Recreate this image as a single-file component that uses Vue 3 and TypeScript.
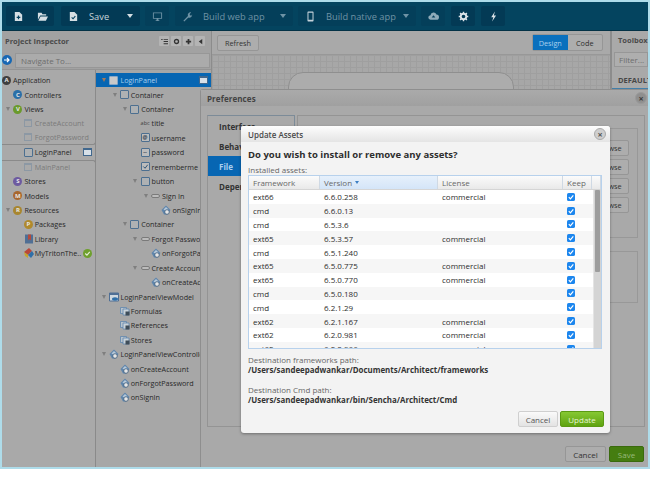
<script setup lang="ts">
interface Row {
  label: string
  level: number
  icon: string
  letter?: string
  color?: string
  arrow?: boolean
  dim?: boolean
  selected?: boolean
  badge?: string
}

const colTop: Row[] = [
  { label: 'Application', level: 0, icon: 'badge', letter: 'A', color: '#3f3f3f' },
  { label: 'Controllers', level: 1, icon: 'badge', letter: 'C', color: '#2a6fa8' },
  { label: 'Views', level: 1, icon: 'badge', letter: 'V', color: '#6a9a2c', arrow: true },
  { label: 'CreateAccount', level: 2, icon: 'win', dim: true },
  { label: 'ForgotPassword', level: 2, icon: 'win', dim: true },
]
const colMid: Row = { label: 'LoginPanel', level: 2, icon: 'box', badge: 'ctl' }
const colBottom: Row[] = [
  { label: 'MainPanel', level: 2, icon: 'win', dim: true },
  { label: 'Stores', level: 1, icon: 'badge', letter: 'S', color: '#6d5aa0' },
  { label: 'Models', level: 1, icon: 'badge', letter: 'M', color: '#a8672f' },
  { label: 'Resources', level: 1, icon: 'badge', letter: 'R', color: '#a8862f', arrow: true },
  { label: 'Packages', level: 2, icon: 'badge', letter: 'P', color: '#b08a2c' },
  { label: 'Library', level: 2, icon: 'book' },
  { label: 'MyTritonThe..', level: 2, icon: 'theme', badge: 'ok' },
]
const colTree: Row[] = [
  { label: 'LoginPanel', level: 0, icon: 'box', arrow: true, selected: true, badge: 'ctl' },
  { label: 'Container', level: 1, icon: 'box', arrow: true },
  { label: 'Container', level: 2, icon: 'box', arrow: true },
  { label: 'title', level: 3, icon: 'abc' },
  { label: 'username', level: 3, icon: 'at' },
  { label: 'password', level: 3, icon: 'pw' },
  { label: 'rememberme', level: 3, icon: 'chk' },
  { label: 'button', level: 3, icon: 'box', arrow: true },
  { label: 'Sign In', level: 4, icon: 'pill', arrow: true },
  { label: 'onSignIn', level: 5, icon: 'ctl' },
  { label: 'Container', level: 2, icon: 'box', arrow: true },
  { label: 'Forgot Password', level: 3, icon: 'pill', arrow: true },
  { label: 'onForgotPassword', level: 4, icon: 'ctl' },
  { label: 'Create Account', level: 3, icon: 'pill', arrow: true },
  { label: 'onCreateAccount', level: 4, icon: 'ctl' },
  { label: 'LoginPanelViewModel', level: 0, icon: 'vm', arrow: true },
  { label: 'Formulas', level: 1, icon: 'stack' },
  { label: 'References', level: 1, icon: 'stack' },
  { label: 'Stores', level: 1, icon: 'stack' },
  { label: 'LoginPanelViewController', level: 0, icon: 'ctl', arrow: true },
  { label: 'onCreateAccount', level: 1, icon: 'ctl' },
  { label: 'onForgotPassword', level: 1, icon: 'ctl' },
  { label: 'onSignIn', level: 1, icon: 'ctl' },
]
const assets = [
  ['ext66', '6.6.0.258', 'commercial'],
  ['cmd', '6.6.0.13', ''],
  ['cmd', '6.5.3.6', ''],
  ['ext65', '6.5.3.57', 'commercial'],
  ['cmd', '6.5.1.240', ''],
  ['ext65', '6.5.0.775', 'commercial'],
  ['ext65', '6.5.0.770', 'commercial'],
  ['cmd', '6.5.0.180', ''],
  ['cmd', '6.2.1.29', ''],
  ['ext62', '6.2.1.167', 'commercial'],
  ['ext62', '6.2.0.981', 'commercial'],
  ['ext62', '6.2.0.966', 'commercial'],
]
const prefTabs = ['Interface', 'Behavior', 'File', 'Dependencies']
const indent = (r: Row, base: number, extra = 0) => `${Math.max(0, r.level + base) * 10.4 + extra}px`
const colOnePad = (r: Row) => indent(r, -1, r.level > 0 ? 1 : 0)
</script>

<template>
  <div class="frame">
    <header class="toolbar">
      <div class="group first">
        <button class="tbtn"><svg viewBox="0 0 12 12"><path d="M2 1h5l3 3v7H2z" fill="#d6dfe4"/><path d="M6 5v4M4 7h4" stroke="#04405e" stroke-width="1.3"/></svg></button>
        <button class="tbtn"><svg viewBox="0 0 12 12"><path d="M1 2h4l1 1.500h4v1.500H3.500L1 9.500zM3.800 6H12l-2.300 4.500H1.500z" fill="#d6dfe4"/></svg></button>
      </div>
      <div class="group save">
        <button class="tbtn"><svg viewBox="0 0 12 12"><path d="M2 1h5l3 3v7H2z" fill="#d6dfe4"/><path d="M4 7l1.500 1.500L8 5.500" stroke="#04405e" stroke-width="1.200" fill="none"/></svg></button>
        <span class="tlabel bright">Save</span>
        <span class="caret bright"></span>
      </div>
      <div class="group dim">
        <button class="tbtn"><svg viewBox="0 0 12 12"><path d="M1 1.500h10v7H1zM2 2.500v5h8v-5zM4 10h4v1H4zM5 8.500h2V10H5z" fill="#6f93a5" fill-rule="evenodd"/></svg></button>
      </div>
      <div class="group dim wide web">
        <button class="tbtn"><svg viewBox="0 0 12 12"><path d="M1.500 10.500l5-5a3 3 0 0 1 3.500-4L8.300 3.200l.5 1.500 1.500.5L11 3.500a3 3 0 0 1-4 3.500l-4.500 4.500z" fill="#6f93a5"/></svg></button>
        <span class="tlabel">Build web app</span>
        <span class="caret"></span>
      </div>
      <div class="group dim wide">
        <button class="tbtn"><svg viewBox="0 0 12 12"><path d="M3.500 0.500h5a.8.8 0 0 1 .8.8v9.400a.8.8 0 0 1-.8.8h-5a.8.8 0 0 1-.8-.8V1.300a.8.8 0 0 1 .8-.8zM3.800 2v7.500h4.400V2z" fill="#c4d2da" fill-rule="evenodd"/></svg></button>
        <span class="tlabel">Build native app</span>
        <span class="caret"></span>
      </div>
      <div class="group dim">
        <button class="tbtn"><svg viewBox="0 0 12 12"><path d="M3 9.500a2.500 2.500 0 0 1-.3-5 3.400 3.400 0 0 1 6.500-.6A2.800 2.800 0 0 1 9.200 9.500z" fill="#8fabb9"/><path d="M6 4.500L4 7h4z" fill="#04405e"/></svg></button>
      </div>
      <div class="group nudge">
        <button class="tbtn"><svg viewBox="0 0 12 12"><circle cx="6" cy="6" r="3" fill="none" stroke="#dbe3e8" stroke-width="2"/><path d="M6 .8v2M6 9.200v2M.8 6h2M9.200 6h2M2.300 2.300l1.400 1.400M8.300 8.300l1.400 1.400M2.300 9.700l1.400-1.400M8.300 3.700l1.400-1.400" stroke="#dbe3e8" stroke-width="1.500"/></svg></button>
      </div>
      <div class="group nudge">
        <button class="tbtn"><svg viewBox="0 0 12 12"><path d="M7.500.5L3.500 6.800h2.300L4.500 11.500 8.800 4.800H6.400z" fill="#dbe3e8"/></svg></button>
      </div>
    </header>

    <div class="workspace">
      <aside class="inspector">
        <div class="insp-head">
          <span class="panel-title">Project Inspector</span>
          <div class="mini-tools">
            <span class="mini"><svg viewBox="0 0 8 8"><path d="M0 1h2v1H0zM3 1h5v1H3zM3 3.500h5v1H3zM3 6h5v1H3z" fill="#333"/></svg></span>
            <span class="mini"><svg viewBox="0 0 8 8"><circle cx="4" cy="4" r="2.300" fill="none" stroke="#333" stroke-width="1.500"/></svg></span>
            <span class="mini"><svg viewBox="0 0 8 8"><path d="M3 1h2v2h2v2H5v2H3V5H1V3h2z" fill="#333"/></svg></span>
            <span class="mini"><svg viewBox="0 0 8 8"><path d="M6 1v6L2 4z" fill="#333"/></svg></span>
          </div>
        </div>
        <div class="nav-row">
          <span class="nav-dot"><svg viewBox="0 0 10 10"><path d="M2 5h5M5 3l2 2-2 2" stroke="#fff" stroke-width="1.200" fill="none"/></svg></span>
          <span class="nav-input">Navigate To...</span>
        </div>
        <div class="trees">
          <div class="col-one">
            <div class="seg seg-top">
              <div v-for="r in colTop" :key="r.label" class="row" :class="{ dimmed: r.dim }" :style="{ paddingLeft: colOnePad(r) }">
                <span v-if="r.level > 0" class="slot"><i v-if="r.arrow" class="arrow"></i></span>
                <span v-if="r.icon === 'badge'" class="disc" :style="{ background: r.color }">{{ r.letter }}</span>
                <span v-else class="win"></span>
                <span class="label">{{ r.label }}</span>
              </div>
            </div>
            <div class="row current" :style="{ paddingLeft: colOnePad(colMid) }">
              <span class="slot"></span>
              <span class="sq"></span>
              <span class="label">{{ colMid.label }}</span>
              <span class="ctl-tag"></span>
            </div>
            <div class="seg seg-bottom">
              <div v-for="r in colBottom" :key="r.label" class="row" :class="{ dimmed: r.dim }" :style="{ paddingLeft: colOnePad(r) }">
                <span class="slot"><i v-if="r.arrow" class="arrow"></i></span>
                <span v-if="r.icon === 'badge'" class="disc" :style="{ background: r.color }">{{ r.letter }}</span>
                <span v-else-if="r.icon === 'win'" class="win"></span>
                <svg v-else-if="r.icon === 'book'" class="ic" viewBox="0 0 10 10"><path d="M1 .5h8v9H1z" fill="#4f6f95"/><path d="M4 .5h3v6L5.500 5 4 6.500z" fill="#b54a3a"/></svg>
                <svg v-else class="ic" viewBox="0 0 10 10"><path d="M0 4l5-4 3 3-4 4z" fill="#b9473a"/><path d="M4 7l4-4 2 3-3 4z" fill="#2f6fa8"/><path d="M0 4l4 3v3L1 8z" fill="#c6a52e"/></svg>
                <span class="label">{{ r.label }}</span>
                <span v-if="r.badge === 'ok'" class="ok-dot"><svg viewBox="0 0 8 8"><path d="M2 4l1.500 1.500L6 2.500" stroke="#e6efda" fill="none"/></svg></span>
              </div>
            </div>
          </div>
          <div class="col-two">
            <div v-for="(r, i) in colTree" :key="i" class="row" :class="{ selected: r.selected }" :style="{ paddingLeft: indent(r, 0, 3) }">
              <span class="slot"><i v-if="r.arrow" class="arrow"></i></span>
              <span v-if="r.icon === 'box'" class="sq"></span>
              <span v-else-if="r.icon === 'abc'" class="abc">abc</span>
              <span v-else-if="r.icon === 'at'" class="sq field">@</span>
              <span v-else-if="r.icon === 'pw'" class="sq field">--</span>
              <span v-else-if="r.icon === 'chk'" class="sq field"><svg viewBox="0 0 8 8"><path d="M1.500 4l2 2 3-4" stroke="#2a4f73" stroke-width="1.100" fill="none"/></svg></span>
              <span v-else-if="r.icon === 'pill'" class="pill"></span>
              <svg v-else-if="r.icon === 'vm'" class="ic" viewBox="0 0 10 10"><path d="M.5 1h9v8h-9z" fill="#cfd8df" stroke="#4f6f95"/><path d="M.5 1h9v2h-9z" fill="#4f6f95"/><ellipse cx="6" cy="7" rx="3" ry="1.700" fill="#2f6fa8"/></svg>
              <svg v-else-if="r.icon === 'stack'" class="ic" viewBox="0 0 10 10"><path d="M.5 1.500h6v6h-6z" fill="#b9c4cd" stroke="#5f86ad" stroke-width=".8"/><path d="M3 3h6v6H3z" fill="#c9d2d9" stroke="#5f86ad" stroke-width=".8"/><rect x="5.500" y="5.500" width="4" height="4" fill="#3f4d59"/></svg>
              <svg v-else class="ic" viewBox="0 0 10 10"><path d="M5 .5L9.500 5 6 9.500H3L.5 5z" fill="#5f86ad"/><path d="M5 2L7.500 4.500 5 6 2.500 4.500z" fill="#b7c9da"/><circle cx="6" cy="7" r="2.300" fill="#e6e6e6" stroke="#3d5c7a" stroke-width=".8"/></svg>
              <span class="label">{{ r.label }}</span>
              <span v-if="r.badge" class="ctl-tag"></span>
            </div>
          </div>
        </div>
      </aside>

      <main class="canvas-area">
        <div class="canvas-bar">
          <span class="btn">Refresh</span>
          <div class="seg-switch"><span class="on">Design</span><span>Code</span></div>
        </div>
        <div class="canvas"><div class="phone-top"></div></div>
      </main>

      <aside class="toolbox">
        <div class="tool-head">Toolbox</div>
        <div class="tool-filter"><span>Filter...</span></div>
        <div class="tool-default">DEFAULT</div>
      </aside>
    </div>

    <section class="prefs">
      <div class="prefs-head">
        <span>Preferences</span>
        <span class="close dark">×</span>
      </div>
      <div class="prefs-body">
        <nav class="prefs-tabs">
          <div v-for="t in prefTabs" :key="t" class="prefs-tab" :class="{ active: t === 'File' }">{{ t }}</div>
        </nav>
        <div class="prefs-panel">
          <div class="prefs-box browse-box">
            <span v-for="n in 4" :key="n" class="btn browse">Browse</span>
          </div>
          <div class="prefs-box lower-box"></div>
        </div>
      </div>
      <div class="prefs-foot">
        <span class="btn foot-cancel">Cancel</span>
        <span class="btn foot-save">Save</span>
      </div>
    </section>

    <section class="assets">
      <div class="assets-head">
        <span>Update Assets</span>
        <span class="close">×</span>
      </div>
      <div class="assets-body">
        <h2>Do you wish to install or remove any assets?</h2>
        <p class="installed">Installed assets:</p>
        <div class="grid">
          <div class="grid-head">
            <span>Framework</span>
            <span class="sorted">Version<i></i></span>
            <span>License</span>
            <span>Keep</span>
            <span></span>
          </div>
          <div class="grid-view">
            <div class="grid-rows">
              <div v-for="(a, i) in assets" :key="i" class="grid-row" :class="{ alt: i % 2 === 1 }">
                <span>{{ a[0] }}</span>
                <span>{{ a[1] }}</span>
                <span>{{ a[2] }}</span>
                <span class="keep"><svg viewBox="0 0 8 8"><rect width="8" height="8" rx="1.600" fill="#1c86ee"/><path d="M1.800 4.200l1.600 1.600 2.900-3.400" stroke="#fff" stroke-width="1.200" fill="none"/></svg></span>
              </div>
            </div>
            <div class="scroll"><div class="thumb"></div></div>
          </div>
        </div>
        <div class="path-block">
          <span>Destination frameworks path:</span>
          <b>/Users/sandeepadwankar/Documents/Architect/frameworks</b>
        </div>
        <div class="path-block">
          <span>Destination Cmd path:</span>
          <b>/Users/sandeepadwankar/bin/Sencha/Architect/Cmd</b>
        </div>
        <div class="assets-foot">
          <span class="btn light">Cancel</span>
          <span class="btn green">Update</span>
        </div>
      </div>
    </section>
  </div>
</template>

<style scoped>
.frame {
  position: relative;
  box-sizing: border-box;
  width: 650px;
  height: 469px;
  border: 2px solid #aedcea;
  background: #a9a9a9;
  display: flex;
  flex-direction: column;
  font-family: "Open Sans", "Liberation Sans", sans-serif;
  font-size: 8px;
  color: #262626;
  box-shadow: 0 9px 9px -7px rgba(0, 0, 0, 0.4);
}
.toolbar {
  height: 29px;
  flex: none;
  background: #04445f;
  display: flex;
  align-items: center;
  padding-left: 4px;
  gap: 5px;
  border-bottom: 1px solid #033246;
  box-sizing: border-box;
}
.group {
  display: flex;
  align-items: center;
  height: 20px;
  background: #033a55;
  border-radius: 2px;
}
.group.dim { background: #043f5a; }
.group.wide { width: 118px; }
.group.save { width: 79px; margin-left: 2px; }
.group.web { margin-left: 1px; }
.group.nudge { margin-left: 1px; }
.tbtn {
  width: 24px;
  height: 20px;
  border: 0;
  padding: 0;
  background: none;
  display: flex;
  align-items: center;
  justify-content: center;
  flex: none;
}
.tbtn svg { width: 11px; height: 11px; }
.tlabel {
  flex: 1;
  font-size: 9.300px;
  color: #6f93a5;
  white-space: nowrap;
  padding-left: 4px;
}
.tlabel.bright { color: #c7d4da; }
.caret {
  width: 0;
  height: 0;
  border: 3.500px solid transparent;
  border-top: 4px solid #6f93a5;
  border-bottom: 0;
  margin-right: 7px;
}
.caret.bright { border-top-color: #d4dee3; }

.workspace {
  flex: 1;
  display: flex;
  min-height: 0;
}
.inspector {
  width: 210px;
  flex: none;
  display: flex;
  flex-direction: column;
  border-right: 1px solid #8c8c8c;
  box-sizing: border-box;
  overflow: hidden;
  background: #a9a9a9;
}
.insp-head {
  height: 20px;
  flex: none;
  padding: 0 6px 0 3px;
  display: flex;
  align-items: center;
  justify-content: space-between;
  background: #a2a2a2;
}
.panel-title { font-weight: 700; color: #4b4b4b; font-size: 7.500px; }
.mini-tools { display: flex; gap: 2px; }
.mini {
  width: 10px;
  height: 10px;
  background: #b4b4b4;
  border-radius: 1px;
  display: flex;
  align-items: center;
  justify-content: center;
}
.mini svg { width: 7px; height: 7px; }
.nav-row {
  height: 18px;
  flex: none;
  display: flex;
  align-items: center;
  gap: 3px;
  background: #a2a2a2;
}
.nav-dot {
  width: 10px;
  height: 10px;
  border-radius: 50%;
  background: #1768b4;
  flex: none;
}
.nav-dot svg { width: 10px; height: 10px; display: block; }
.nav-input {
  flex: 1;
  height: 15px;
  margin-right: 1px;
  background: #ababab;
  border: 1px solid #979797;
  box-sizing: border-box;
  display: flex;
  align-items: center;
  padding-left: 5px;
  color: #6d6d6d;
}
.trees {
  flex: 1;
  display: flex;
  min-height: 0;
  border-top: 1px solid #949494;
  padding-top: 3px;
  background: #a9a9a9;
}
.col-one { width: 94px; flex: none; font-size: 7.200px; }
.seg-top {
  border-right: 1px solid #8a8a8a;
  border-bottom: 1px solid #8a8a8a;
  border-bottom-right-radius: 3px;
}
.seg-bottom {
  border-right: 1px solid #8a8a8a;
  border-top: 1px solid #8a8a8a;
  border-top-right-radius: 3px;
  height: 310px;
  box-sizing: border-box;
}
.col-two {
  flex: 1;
  min-width: 0;
  border-left: 1px solid #8a8a8a;
  margin-left: -1px;
  overflow: hidden;
  margin-top: -3px;
  padding-top: 3px;
  background: #a7a7a7;
  font-size: 7.200px;
}
.row {
  height: 14.430px;
  display: flex;
  align-items: center;
  white-space: nowrap;
  box-sizing: border-box;
  position: relative;
}
.seg-top .row:last-child { height: 13.430px; }
.seg-bottom .row:first-child { height: 13.430px; }
.slot {
  width: 10.400px;
  flex: none;
  display: flex;
  justify-content: center;
}
.arrow {
  width: 0;
  height: 0;
  border: 2.500px solid transparent;
  border-top: 4px solid #7f7f7f;
  border-bottom: 0;
}
.label { margin-left: 2px; color: #282828; }
.dimmed .label { color: #7b7b7b; }
.disc {
  width: 9px;
  height: 9px;
  border-radius: 50%;
  color: #e6e6e6;
  font-size: 6px;
  font-weight: 700;
  display: flex;
  align-items: center;
  justify-content: center;
  flex: none;
  line-height: 1;
}
.win {
  width: 8px;
  height: 8px;
  border: 1px solid #8c98a4;
  border-top-width: 2px;
  box-sizing: border-box;
  flex: none;
  margin: 0 .5px;
}
.sq {
  width: 9px;
  height: 9px;
  border: 1px solid #4c6f90;
  border-radius: 1px;
  box-sizing: border-box;
  flex: none;
  background: #aeb1b3;
  display: flex;
  align-items: center;
  justify-content: center;
}
.sq.field {
  font-size: 5.500px;
  line-height: 1;
  font-weight: 700;
  color: #3c4a57;
  background: #bcbcbc;
}
.sq svg { width: 7px; height: 7px; }
.abc { width: 9px; font-size: 5.500px; color: #3c3c3c; flex: none; }
.pill {
  width: 9px;
  height: 4px;
  border: 1px solid #7a7a7a;
  border-radius: 2px;
  box-sizing: border-box;
  background: #bcbcbc;
  flex: none;
}
.ic { width: 10px; height: 10px; flex: none; margin-right: -1px; }
.ctl-tag {
  position: absolute;
  right: 3px;
  width: 9px;
  height: 8px;
  background: #d7e0e8;
  border: 1px solid #41688e;
  border-top-width: 2px;
  box-sizing: border-box;
}
.current .ctl-tag { right: 4px; }
.ok-dot {
  width: 9px;
  height: 9px;
  border-radius: 50%;
  background: #6fa02e;
  margin-left: 2px;
  flex: none;
}
.ok-dot svg { width: 9px; height: 9px; display: block; }
.selected { background: #0766b3; }
.selected .label { color: #a9cfee; }
.selected .arrow { border-top-color: #a4795a; }
.selected .sq { background: #c9c9c9; border-color: #88a7c6; }

.canvas-area {
  flex: 1;
  min-width: 0;
  display: flex;
  flex-direction: column;
  background: #a9a9a9;
}
.canvas-bar {
  height: 24px;
  flex: none;
  display: flex;
  justify-content: space-between;
  align-items: flex-end;
  padding: 0 7px 3px 5px;
  border-bottom: 1px solid #989898;
  box-sizing: border-box;
  font-size: 7.300px;
}
.btn {
  display: inline-flex;
  align-items: center;
  justify-content: center;
  border: 1px solid #969696;
  border-radius: 2px;
  background: #adadad;
  color: #333;
  box-sizing: border-box;
}
.canvas-bar .btn { width: 42px; height: 16px; }
.seg-switch {
  display: flex;
  width: 71px;
  height: 17px;
  border: 1px solid #969696;
  border-radius: 2px;
  box-sizing: border-box;
  background: #adadad;
}
.seg-switch span {
  flex: 1;
  display: flex;
  align-items: center;
  justify-content: center;
  color: #2d2d2d;
}
.seg-switch .on { background: #0a70bd; color: #a9cfee; }
.canvas {
  flex: 1;
  padding: 17px 96px 0 76px;
  background-color: #a7a7a7;
  background-image:
    linear-gradient(#9f9f9f 1px, transparent 1px),
    linear-gradient(90deg, #9f9f9f 1px, transparent 1px);
  background-size: 6px 6px;
}
.phone-top {
  height: 200px;
  border: 1px solid #8f8f8f;
  border-radius: 15px 15px 0 0;
  background: #acacac;
}
.toolbox {
  width: 38px;
  flex: none;
  border-left: 2px solid #8c8c8c;
  box-sizing: border-box;
  overflow: hidden;
  white-space: nowrap;
  background: #a9a9a9;
}
.tool-head {
  height: 18px;
  padding-left: 6px;
  display: flex;
  align-items: center;
  font-weight: 700;
  font-size: 7.500px;
  color: #4b4b4b;
}
.tool-filter {
  height: 15px;
  margin: 3px 0 5px 2px;
  border: 1px solid #979797;
  background: #aeaeae;
  box-sizing: border-box;
  padding-left: 4px;
  display: flex;
  align-items: center;
  color: #6d6d6d;
}
.tool-default {
  height: 17px;
  padding-left: 6px;
  display: flex;
  align-items: center;
  font-weight: 700;
  font-size: 7.500px;
  color: #474747;
  border-bottom: 1px solid #427fa9;
  box-sizing: border-box;
}

.prefs {
  position: absolute;
  left: 198px;
  top: 87px;
  right: 0;
  bottom: 0;
  background: #a9a9a9;
  border-top: 1px solid #8e8e8e;
  border-left: 1px solid #8e8e8e;
  border-top-left-radius: 3px;
  display: flex;
  flex-direction: column;
}
.prefs-head {
  height: 16px;
  flex: none;
  padding: 0 1px 0 6px;
  display: flex;
  align-items: center;
  justify-content: space-between;
  font-weight: 700;
  font-size: 8px;
  color: #434343;
  background: linear-gradient(#aaaaaa, #a0a0a0);
  letter-spacing: .1px;
}
.close {
  width: 10px;
  height: 10px;
  border-radius: 50%;
  background: #cfcfcf;
  border: 1px solid #aaa;
  display: flex;
  align-items: center;
  justify-content: center;
  font-size: 9px;
  line-height: 1;
  color: #555;
  font-weight: 700;
}
.close.dark { background: #8f8f8f; border-color: #9a9a9a; color: #3d3d3d; }
.prefs-body {
  flex: 1;
  min-height: 0;
  display: flex;
  gap: 2px;
  padding: 9px 3px 0 6px;
}
.prefs-tabs {
  width: 88px;
  flex: none;
  box-sizing: border-box;
  height: 312px;
  border: 1px solid #949494;
  border-top-color: #7c8b98;
  border-right-color: #7c8b98;
  background: #a9a9a9;
  overflow: hidden;
}
.prefs-tab {
  height: 20px;
  display: flex;
  align-items: center;
  padding-left: 11px;
  font-weight: 700;
  font-size: 8px;
  color: #333;
  white-space: nowrap;
}
.prefs-tab.active { background: #0766b3; color: #a9cfee; }
.prefs-panel {
  flex: 1;
  height: 312px;
  border: 1px solid #949494;
  box-sizing: border-box;
  padding: 12px 6px 0 0;
  display: flex;
  flex-direction: column;
  align-items: flex-end;
  gap: 13px;
}
.prefs-box {
  width: 240px;
  border: 1px solid #989898;
  box-sizing: border-box;
}
.browse-box {
  height: 110px;
  padding: 11px 8px 0 0;
  display: flex;
  flex-direction: column;
  align-items: flex-end;
  gap: 3px;
}
.btn.browse { width: 40px; height: 16px; font-size: 7.300px; }
.lower-box { height: 52px; }
.prefs-foot {
  height: 26px;
  flex: none;
  padding-right: 4px;
  display: flex;
  align-items: center;
  justify-content: flex-end;
  gap: 3px;
}
.foot-cancel { width: 41px; height: 16px; }
.foot-save {
  width: 35px;
  height: 16px;
  background: #457d10;
  border-color: #3a6a0d;
  color: #99b97c;
}

.assets {
  position: absolute;
  left: 239px;
  top: 124px;
  width: 369px;
  height: 307px;
  background: #f3f3f3;
  border-radius: 3px;
  display: flex;
  flex-direction: column;
  box-shadow: 0 1px 3px rgba(0, 0, 0, .35);
  overflow: hidden;
}
.assets-head {
  height: 16px;
  flex: none;
  padding: 0 4px 0 7px;
  display: flex;
  align-items: center;
  justify-content: space-between;
  font-weight: 600;
  font-size: 8px;
  color: #4a4a4a;
  background: linear-gradient(#fdfdfd, #e4e4e4);
}
.assets-body {
  flex: 1;
  padding: 0 5px 0 7px;
  display: flex;
  flex-direction: column;
  min-height: 0;
}
h2 {
  margin: 6px 0 0;
  font-size: 9.500px;
  line-height: 14px;
  font-weight: 700;
  color: #2e2e2e;
}
.installed {
  margin: 3px 0 0;
  font-size: 8px;
  line-height: 10px;
  color: #666;
}
.grid {
  margin-right: 3px;
  height: 174px;
  flex: none;
  border: 1px solid #b7d1ec;
  box-sizing: border-box;
  background: #fff;
  display: flex;
  flex-direction: column;
}
.grid-head, .grid-row {
  display: grid;
  grid-template-columns: 71px 118px 125px 29px;
}
.grid-head {
  grid-template-columns: 71px 118px 125px 29px 9px;
  height: 14px;
  flex: none;
  background: linear-gradient(#fbfbfb, #e9e9e9);
  color: #676767;
  border-bottom: 1px solid #d5d5d5;
  box-sizing: border-box;
}
.grid-head span {
  display: flex;
  align-items: center;
  padding-left: 4px;
  border-right: 1px solid #cfd9e4;
}
.grid-head .sorted { background: linear-gradient(#e6f0fb, #d4e5f8); }
.sorted i {
  margin-left: 3px;
  width: 0;
  height: 0;
  border: 2.500px solid transparent;
  border-top: 3px solid #3c7fc4;
  border-bottom: 0;
}
.grid-view {
  flex: 1;
  min-height: 0;
  display: flex;
}
.grid-rows {
  flex: 1;
  min-width: 0;
  overflow: hidden;
}
.grid-row {
  height: 13.800px;
  align-items: center;
  color: #2d2d2d;
}
.grid-row span { padding-left: 4px; }
.grid-row.alt { background: #f6f6f6; }
.keep { display: flex; }
.keep svg { width: 8px; height: 8px; }
.scroll {
  width: 8px;
  flex: none;
  background: #d4d4d4;
  border-left: 1px solid #e4e4e4;
  box-sizing: border-box;
}
.thumb {
  height: 82px;
  background: #9d9d9d;
  border-radius: 1px;
  margin: 0 1px;
}
.path-block {
  display: flex;
  flex-direction: column;
  margin-top: 6px;
  line-height: 10px;
  font-size: 8px;
  color: #666;
  margin-bottom: 4px;
}
.path-block b { color: #333; font-weight: 700; font-size: 7.900px; }
.assets-foot {
  margin-top: auto;
  padding: 0 1px 6px 0;
  display: flex;
  justify-content: flex-end;
  gap: 2px;
}
.btn.light {
  width: 40px;
  height: 16px;
  background: linear-gradient(#fafafa, #e3e3e3);
  border-color: #cfcfcf;
  color: #555;
}
.btn.green {
  width: 44px;
  height: 16px;
  background: linear-gradient(#86c833, #5fa311);
  border-color: #5b9a14;
  color: #e6f4d4;
}
</style>
